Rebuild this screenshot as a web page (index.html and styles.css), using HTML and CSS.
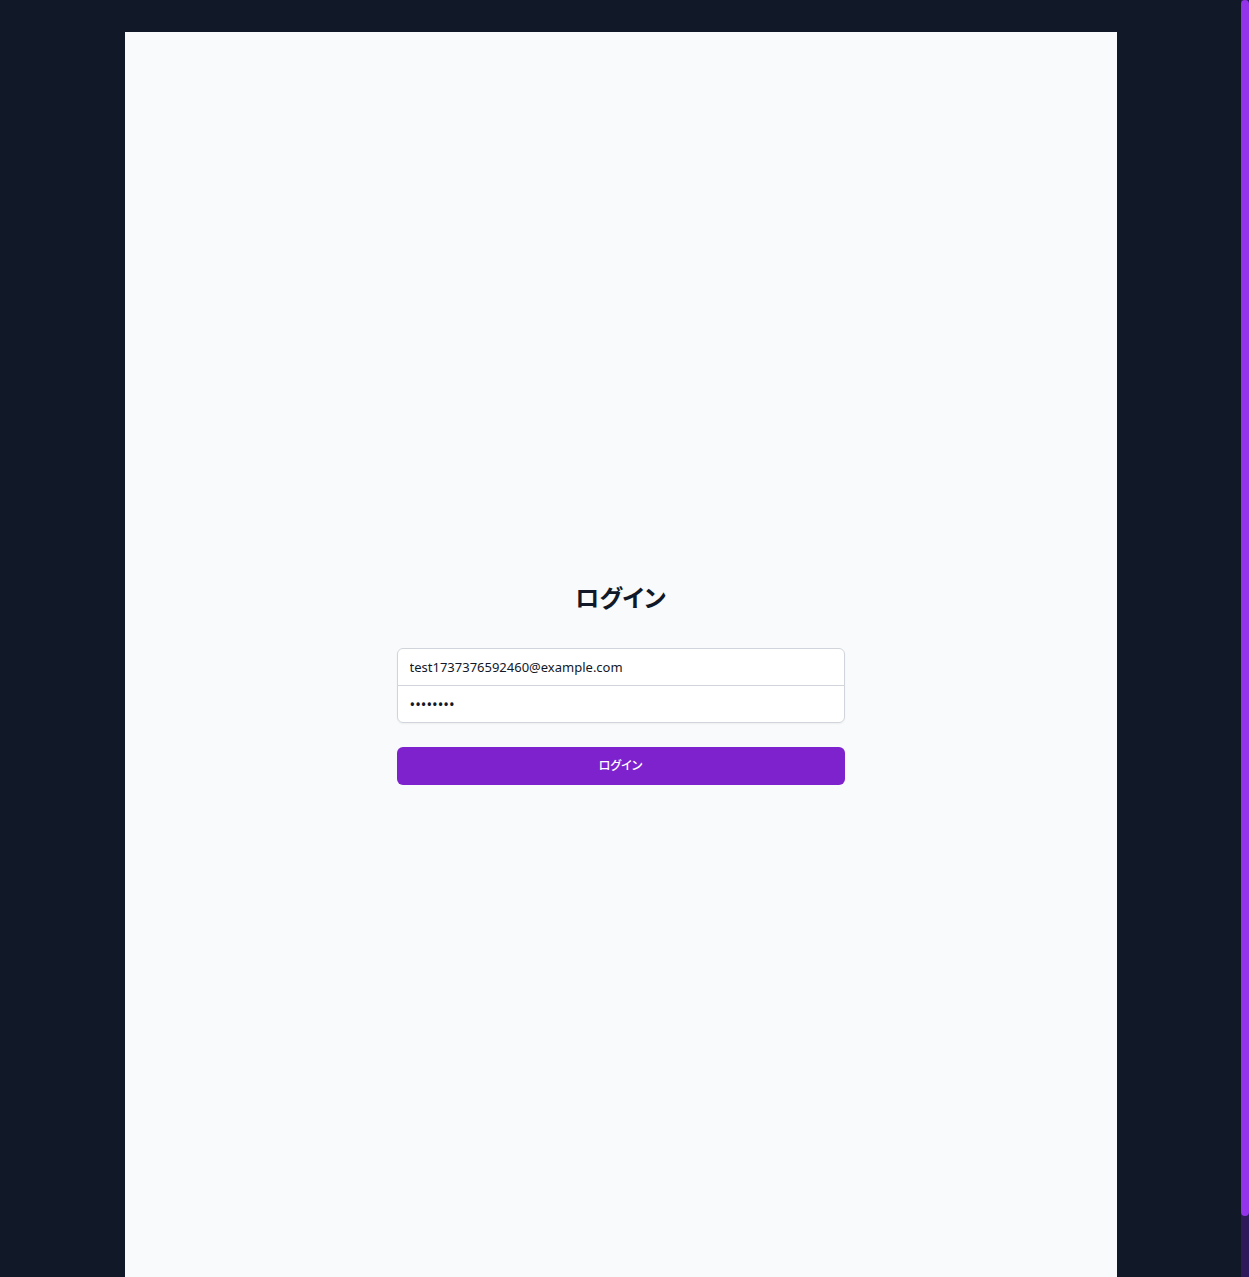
FILE: index.html
```html
<!DOCTYPE html>
<html lang="ja">
<head>
<meta charset="utf-8">
<meta name="viewport" content="width=device-width, initial-scale=1">
<title>ログイン</title>
<link rel="stylesheet" href="styles.css">
</head>
<body>
<main class="page">
  <section class="panel">
    <div class="login">
      <h1 class="title">ログイン</h1>
      <form class="form">
        <div class="fields">
          <input class="field" type="email" aria-label="メールアドレス" autocomplete="email" value="test1737376592460@example.com">
          <input class="field field-password" type="password" aria-label="パスワード" autocomplete="current-password" value="password">
        </div>
        <button class="submit" type="submit">ログイン</button>
      </form>
    </div>
  </section>
</main>
<div class="scrollbar" aria-hidden="true"><div class="scrollbar-thumb"></div></div>
</body>
</html>
```

FILE: styles.css
```css
* { box-sizing: border-box; }

html {
  background: #111827;
  scrollbar-width: none;
}

body {
  margin: 0;
  padding-right: 8px;
  background: #111827;
  color: #111827;
  font-family: "Noto Sans", "Noto Sans CJK JP", sans-serif;
  font-size: 13px;
  line-height: 20px;
}

/* Page scrollbar, over the right edge of the window */
.scrollbar {
  position: fixed;
  top: 0;
  right: 0;
  bottom: 0;
  width: 8px;
  background: #2e1a5a;
}

.scrollbar-thumb {
  height: calc(100% - 61px);
  border-radius: 4px;
  background: #9333ea;
}

.page {
  max-width: 1024px;
  margin: 0 auto;
  padding: 32px 16px;
}

.panel {
  display: flex;
  align-items: center;
  justify-content: center;
  min-height: 100vh;
  padding: 48px 16px;
  background: #f9fafb;
}

.login {
  width: 100%;
  max-width: 448px;
}

.title {
  margin: 24px 0 32px;
  font-size: 24px;
  line-height: 36px;
  font-weight: 600;
  font-feature-settings: "palt";
  text-align: center;
}

.form {
  display: flex;
  flex-direction: column;
  gap: 24px;
}

.fields {
  display: flex;
  flex-direction: column;
  border-radius: 6px;
  box-shadow: 0 1px 2px rgb(0 0 0 / 5%);
}

.field {
  width: 100%;
  height: 38px;
  margin: 0;
  padding: 8px 12px;
  border: 1px solid #d1d5db;
  background: #fff;
  color: #111827;
  font: inherit;
}

.field:first-child { border-radius: 6px 6px 0 0; }

.field:last-child {
  margin-top: -1px;
  border-radius: 0 0 6px 6px;
}

.field-password { font-size: 15px; }

.submit {
  height: 38px;
  padding: 8px 16px;
  border: 0;
  border-radius: 6px;
  background: #7e22ce;
  color: #fff;
  font: inherit;
  font-size: 12px;
  font-weight: 500;
  font-feature-settings: "palt";
}
```
